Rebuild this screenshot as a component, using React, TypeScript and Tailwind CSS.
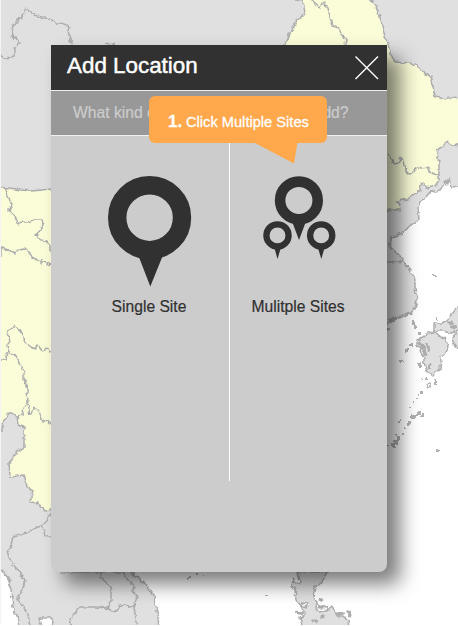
const LAND = "#e0e0e0";
const HIGHLIGHT = "#fbfdd8";
const BORDER = "#adadad";

const islands: [number, number, number, number][] = [
  [433, 275, 3, 2], [413, 320, 2, 9], [418, 332, 3, 3], [409, 344, 4, 3], [405, 349, 4, 4], [400, 360, 3, 2],
  [418, 363, 3, 4], [421, 378, 2, 1], [426, 378, 2, 2], [434, 379, 2, 6], [420, 391, 3, 2], [418, 395, 1, 2],
  [416, 398, 2, 1], [413, 401, 2, 1], [408, 408, 3, 1], [416, 412, 4, 3], [411, 415, 5, 4], [421, 414, 3, 2],
  [407, 421, 3, 4], [399, 420, 1, 3], [403, 427, 3, 2], [401, 433, 3, 2], [396, 437, 4, 3], [394, 440, 4, 4],
  [391, 444, 4, 3], [395, 434, 2, 2], [387, 445, 2, 2], [437, 450, 3, 2], [187, 577, 3, 2], [196, 572, 2, 3],
  [202, 575, 1, 2], [265, 595, 2, 1], [7, 577, 4, 5], [13, 612, 2, 3], [436, 318, 1, 2],
];

function MapBackground() {
  return (
    <svg className="absolute inset-0 h-full w-full" viewBox="0 0 458 626" aria-hidden="true">
      <filter id="coastline" x="-10" y="-10" width="478" height="646" filterUnits="userSpaceOnUse" colorInterpolationFilters="sRGB">
        <feTurbulence type="fractalNoise" baseFrequency="0.2" numOctaves="2" seed="4" />
        <feDisplacementMap in="SourceGraphic" scale="5" xChannelSelector="R" yChannelSelector="G" />
      </filter>
      <rect width="458" height="626" fill="#fff" />
      <g stroke={BORDER} strokeWidth="1.5" strokeLinejoin="round" filter="url(#coastline)">
        <path fill={LAND} d="M-8-8H466V185L452 187 450 178 445 182 440 190 430 192 425 198 420 203 418 208 419 220 413 223 407 230 398 235 392 237 389 247 396 252 402 258 405 264 411 271 415 280 415 288 417 300 415 308 411 313 400 317 388 323H60V572H131L138 578 147 585 149 590 154 595 155 605 158 614 159 634H20L17 615 13 607 11 590 7 578 3 571-8 560Z" />
        <path fill={HIGHLIGHT} d="M-8 187 10 188 21 190 32 191 51 189H65V510H51L45 511 38 503 30 502 33 490 27 488 26 481 24 475 10 477 9 463 13 457 20 450 24 447 24 427 18 425 17 416 9 412 7 417 2 423-8 424Z" />
        <path fill={HIGHLIGHT} d="M294-8 295 0 303 1 305 13 300 18 296 20 293 30 288 36 285 44 320 210H387L401 210 400 205 397 201 408 199 413 195 420 190 421 184 424 183 427 188 435 186 439 180V163L438 157 436 150 442 147 447 142 452 145 466 147V98L452 97 446 99 435 97 433 87 431 82 432 76 426 75 420 68 415 65 410 62 403 63 396 62 390 55 390 47 387 43 384 33 382 26 380 17 377 11 376 5 371 0V-8Z" />
        <path fill={LAND} d="M466 302 455 310 447 320 442 323 434 323 434 331 443 331 450 333 466 329Z" />
        <path fill={LAND} d="M435 332 428 333 424 337 417 340 417 345 421 347 420 352 424 358 424 363 427 371 433 375 435 372 440 370 441 357 446 353 448 346 445 338 441 337Z" />
        <path fill={LAND} d="M466 332 455 334 452 338 454 344 458 349H466Z" />
        <path fill={LAND} d="M298 572 300 583 297 584 293 578 292 586 295 590 296 600 302 607 305 615 300 618 305 634H350L348 621 343 616 337 616 332 606 326 611 319 612 316 609 317 601 313 597 315 587 320 584 323 580 327 572Z" />
        <path fill="#fff" d="M39 618H52L51 634H42Z" />
        <path fill="#fff" d="M303 602 307 603 306 608 302 606Z" />
        <g fill="none">
          <path d="M-1 55 5 58 11 57 15 53 15 48 19 43 14 37 12 33 13 26 17 23 17 20 23 17 24 11 26 9 31 13 38 16 45 18 50 19 56 23 60 23 67 25 69 34 70 40 73 45" />
          <path d="M106 44.5H115M310-1 314 3 319 7 323 3 328 8 330 17 332 26 339 28 342 34 346 40 345 45" />
          <path d="M5 187 8 196 12 205 9 210 15 217 18 224 21 222 27 222 34 220 42 220 43 225 40 232 35 235 41 240 50 245V251" />
          <path d="M1 257V248L8 250 15 254 19 250 25 249 31 255 37 261 44 262 51 265M42 258V264" />
          <path d="M0 360H5L8 351 7 345 10 341 7 333 11 328 15 325 20 331 26 343 31 347 36 349 38 345 42 351 47 349 51 352" />
          <path d="M7 352 14 354 18 360 21 368 24 371 24 379 27 389 28 404 30 415 35 407 39 411 43 422 48 421 51 425M28 405 22 407 23 415 17 416" />
          <path d="M2 432V423M51 513 47 520 41 526 33 529 27 533 13 536 11 546 7 553 12 563 19 572 25 580 22 592 17 597 21 604 28 613 30 628M41 526 44 530 45 537H51" />
          <path d="M101 572V578L107 583 111 590 111 602 107 608 95 607 80 607 75 613 70 618 72 628M100 606 108 609 116 612 120 605 124 604 128 607 135 606" />
          <path d="M123 572 127 579 134 586 133 591 137 596 134 608 137 628" />
          <path d="M387 154 391 157 395 164 398 163 402 157 404 166 409 174 413 171 417 167 422 168 427 167 430 172 439 176M387 262 399 262 402 259" />
        </g>
        <path fill="none" strokeWidth="3" d="M388 321 394 319 401 316M419 342 424 348 425 356M427 343 429 352M430 364 429 369M447 323 454 323M450 327 457 327M444 181 447 184 450 180M387 329H390M319 599 323 601M318 607 327 607M312 621 318 621M337 614 344 613M346 611 350 613 349 617M320 618 324 615M296 612 303 614" />
        <circle cx="429" cy="385" r="2" fill="none" />
      </g>
      <g fill="#b2b2b2" filter="url(#coastline)">
        {islands.map(([x, y, w, h], i) => (
          <rect key={i} x={x} y={y} width={w} height={h} />
        ))}
      </g>
      <rect width="1" height="626" fill="#f4f4f4" />
      <rect y="625" width="458" height="1" fill="#fff" />
    </svg>
  );
}

function SinglePin() {
  return (
    <svg width="84" height="111" viewBox="108 176.5 84 111" aria-hidden="true">
      <circle cx="149.6" cy="218.2" r="32.4" fill="none" stroke="#313131" strokeWidth="18.4" />
      <path fill="#313131" d="M138 256 139.5 259 150.3 287 162 258 163 256Z" />
    </svg>
  );
}

function MultiplePins() {
  return (
    <svg width="74" height="84" viewBox="262 176 74 84" aria-hidden="true">
      <g fill="none" stroke="#313131">
        <circle cx="298.9" cy="200.4" r="18.8" strokeWidth="10.6" />
        <circle cx="277.5" cy="235.4" r="11.1" strokeWidth="6.3" />
        <circle cx="321.2" cy="235.4" r="11.1" strokeWidth="6.3" />
      </g>
      <path fill="#313131" d="M291 221 293 224 299 240 305 224 307 221ZM273 247 274.7 249 277.5 259 280.5 249 282 247ZM316.5 247 318.3 249 321.3 259 324.2 249 326 247Z" />
    </svg>
  );
}

export default function App() {
  return (
    <div className="relative h-[626px] w-[458px] overflow-hidden font-['Liberation_Sans',Arial,sans-serif]">
      <MapBackground />
      <div className="relative ml-[51px] mt-[45px] flex h-[527px] w-[336px] flex-col rounded-b-lg bg-[#ccc] shadow-[13px_12px_20px_rgba(0,0,0,0.52)]">
        <header className="flex h-[46px] shrink-0 items-start justify-between border-b border-[#eee] bg-[#313131] pl-4 pr-2">
          <h1 className="mt-2 whitespace-nowrap text-[22.4px] leading-[26px] text-white [-webkit-text-stroke:0.45px_white]">Add Location</h1>
          <button aria-label="Close" className="mt-[10px]">
            <svg width="25" height="25" viewBox="0 0 25 25" fill="none" stroke="#fff" strokeWidth="1.4">
              <path d="M1.5 1.5 24 24M24 1.5 1.5 24" />
            </svg>
          </button>
        </header>
        <div className="flex h-[45px] shrink-0 items-center border-b border-[#f0f0f0] bg-[#989898] pl-[22px]">
          <p className="whitespace-nowrap text-[15.7px] leading-5 text-[#ccc] [-webkit-text-stroke:0.2px_#ccc]">What kind of site would you like to add?</p>
        </div>
        <div className="flex h-[345px] text-[15.65px] leading-5 text-[#313131] [-webkit-text-stroke:0.2px_#313131]">
          <button className="flex w-[179px] shrink-0 flex-col items-center border-r border-white pl-[19px] pt-[40px]">
            <SinglePin />
            <span className="mr-px mt-[10px] whitespace-nowrap">Single Site</span>
          </button>
          <button className="flex flex-1 flex-col items-center pr-[19px] pt-[40px]">
            <MultiplePins />
            <span className="mr-[2px] mt-[37px] whitespace-nowrap">Mulitple Sites</span>
          </button>
        </div>
      </div>
      <div className="absolute left-[149px] top-[96px] flex h-[47px] w-[178px] items-center rounded-md bg-[#ffa84c] pl-[19px] pt-1 text-white">
        <strong className="w-[18px] text-[17px] leading-5 [-webkit-text-stroke:0.3px_white]">1.</strong>
        <span className="whitespace-nowrap text-[14.65px] leading-5 [-webkit-text-stroke:0.3px_white]">Click Multiple Sites</span>
        <svg className="absolute left-[104px] top-[46px]" width="46" height="22" viewBox="0 0 46 22" fill="#ffa84c" aria-hidden="true">
          <path d="M0 0H44.5L41 21.5Z" />
        </svg>
      </div>
    </div>
  );
}
